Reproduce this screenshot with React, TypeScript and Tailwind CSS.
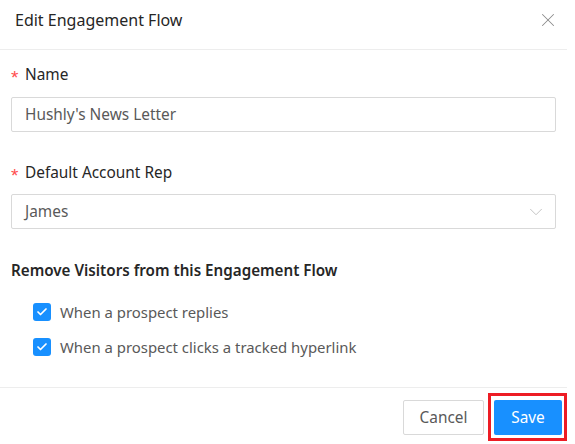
import { Check, ChevronDown, X } from 'lucide-react';

function CheckRow({ label }: { label: string }) {
  return (
    <label className="flex items-center h-[24px]">
      <span className="flex items-center justify-center w-[18px] h-[18px] rounded-[3px] bg-[#1890ff]">
        <Check className="w-[12px] h-[12px] text-white" strokeWidth={3.5} />
      </span>
      <span className="ml-[9px] text-[14.9px] text-[#595959]">{label}</span>
    </label>
  );
}

function FieldLabel({ children }: { children: string }) {
  return (
    <div className="flex items-center h-[24px] text-[15.4px] text-[#262626]">
      <span className="text-[#ff4d4f] w-[14px] text-[19px] leading-none mt-[4px]" style={{ fontFamily: '"Liberation Sans", sans-serif' }}>
        *
      </span>
      {children}
    </div>
  );
}

export default function App() {
  return (
    <div className="w-[575px] h-[444px] bg-white overflow-hidden" style={{ fontFamily: '"Noto Sans", "Open Sans", sans-serif' }}>
      <div className="w-[567px]">
        <div className="flex items-start justify-between h-[50px] border-b border-[#ededed] pl-[15px] pr-[8px] pt-[8px]">
          <h1 className="text-[16px] leading-[24px] text-[#262626]">Edit Engagement Flow</h1>
          <X className="w-[22px] h-[22px] mt-[1px] text-[#8c8c8c]" strokeWidth={1.1} />
        </div>

        <div className="px-[11px]">
          <div className="mt-[13px]">
            <FieldLabel>Name</FieldLabel>
          </div>
          <div className="mt-[10px] h-[35px] border border-[#d9d9d9] rounded-[2px] flex items-center px-[13px] text-[15.4px] text-[#595959]">
            Hushly's News Letter
          </div>

          <div className="mt-[29px]">
            <FieldLabel>Default Account Rep</FieldLabel>
          </div>
          <div className="mt-[9px] h-[35px] border border-[#d9d9d9] rounded-[2px] flex items-center justify-between pl-[13px] pr-[8px] text-[15.4px] text-[#595959]">
            <span>James</span>
            <ChevronDown className="w-[22px] h-[22px] text-[#bfbfbf]" strokeWidth={1} />
          </div>

          <div className="mt-[29px] h-[24px] flex items-center text-[15.2px] font-semibold text-[#262626]">
            Remove Visitors from this Engagement Flow
          </div>

          <div className="mt-[18px] pl-[22px] flex flex-col gap-[11px]">
            <CheckRow label="When a prospect replies" />
            <CheckRow label="When a prospect clicks a tracked hyperlink" />
          </div>
        </div>

        <div className="mt-[28px] border-t border-[#ededed] flex justify-end gap-[10px] pt-[12px] pr-[5px]">
          <button className="w-[81px] h-[35px] border border-[#d9d9d9] rounded-[2px] bg-white text-[15.4px] text-[#595959]">
            Cancel
          </button>
          <span className="relative">
            <button className="w-[68px] h-[35px] rounded-[2px] bg-[#1890ff] text-[15.4px] text-white">Save</button>
            <span className="absolute left-[-6px] right-[-5px] top-[-7px] bottom-[-6px] border-[3px] border-[#ed1c24]" />
          </span>
        </div>
      </div>
    </div>
  );
}
